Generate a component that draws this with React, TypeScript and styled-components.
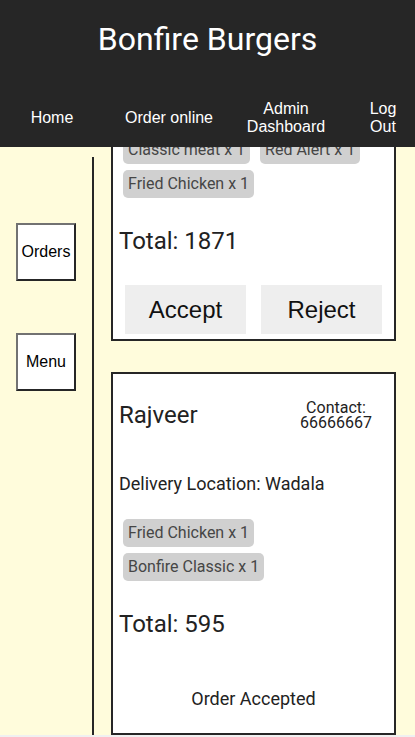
import React, { useLayoutEffect, useRef } from "react";
import styled, { createGlobalStyle } from "styled-components";

const Global = createGlobalStyle`
  html, body { margin: 0; padding: 0; background: #f0f0f0; }
  body { font-family: Roboto, "Liberation Sans", sans-serif; }
  * { box-sizing: border-box; }
`;

const Page = styled.div`
  width: 415px;
  height: 735px;
  display: flex;
  flex-direction: column;
  background: #fffcdc;
  overflow: hidden;
`;

const Header = styled.header`
  background: #262626;
  height: 147px;
  flex: none;
`;

const Title = styled.h1`
  margin: 0;
  padding: 20px 0 31px;
  font-family: Roboto, sans-serif;
  font-weight: 400;
  font-size: 32px;
  line-height: 38px;
  color: #ffffff;
  text-align: center;
`;

const Nav = styled.nav`
  display: grid;
  grid-template-columns: 104px 130px 104px 1fr;
  align-items: center;
  height: 58px;
`;

const NavItem = styled.a<{ $end?: boolean }>`
  justify-self: ${(p) => (p.$end ? "end" : "center")};
  margin-right: ${(p) => (p.$end ? "12px" : "0")};
  width: ${(p) => (p.$end ? "40px" : "auto")};
  text-align: center;
  font-family: "Liberation Sans", Arial, sans-serif;
  font-size: 16px;
  line-height: 18px;
  color: #ffffff;
`;

const Body = styled.div`
  display: flex;
  flex: 1;
  min-height: 0;
`;

const Sidebar = styled.aside`
  width: 94px;
  flex: none;
  margin-top: 10px;
  border-right: 2px solid #262626;
  padding: 66px 0 0 16px;
  display: flex;
  flex-direction: column;
  gap: 52px;
`;

const SideButton = styled.button`
  width: 60px;
  height: 58px;
  padding: 0;
  background: #ffffff;
  border: 2px solid;
  border-color: #727272 #262626 #262626 #727272;
  font-family: "Liberation Sans", Arial, sans-serif;
  font-size: 16px;
  color: #000;
`;

const Content = styled.main`
  flex: 1;
  overflow-y: auto;
  scrollbar-width: none;
  &::-webkit-scrollbar { display: none; }
`;

const Feed = styled.div`
  display: flex;
  flex-direction: column;
  gap: 31px;
  padding: 20px 19px 20px 17px;
`;

const Card = styled.section`
  width: 285px;
  background: #ffffff;
  border: 2px solid #262626;
  padding: 26px 6px 0;
  color: #222;
`;

const NameRow = styled.div`
  display: flex;
  justify-content: space-between;
  align-items: center;
  height: 30px;
`;

const Name = styled.h2`
  margin: 0;
  font-weight: 400;
  font-size: 24px;
  line-height: 28px;
`;

const Contact = styled.div`
  width: 100px;
  margin-right: 2px;
  text-align: center;
  font-size: 16px;
  line-height: 15px;
`;

const Location = styled.p`
  margin: 43px 0 0;
  font-size: 18px;
  line-height: 21px;
`;

const Tags = styled.div`
  display: flex;
  flex-wrap: wrap;
  gap: 6px 10px;
  margin: 25px 0 0 4px;
`;

const Tag = styled.span`
  height: 28px;
  padding: 0 5px;
  border-radius: 5px;
  background: #d0d0d0;
  color: #464646;
  font-size: 16px;
  line-height: 28px;
`;

const Total = styled.p`
  margin: 29px 0 0;
  font-size: 24px;
  line-height: 28px;
`;

const Actions = styled.div`
  display: flex;
  gap: 15px;
  margin: 30px 6px 5px;
`;

const ActionButton = styled.button`
  flex: 1;
  height: 49px;
  border: none;
  background: #eeeeee;
  font-family: "Liberation Sans", Arial, sans-serif;
  font-size: 24px;
  color: #111;
`;

const Status = styled.p`
  margin: 50px 0 24px;
  text-align: center;
  font-size: 18px;
  line-height: 21px;
`;

type Order = {
  name: string;
  contact: string;
  location: string;
  items: string[];
  total: number;
  accepted: boolean;
};

const orders: Order[] = [
  {
    name: "Aarav",
    contact: "98765432",
    location: "Dadar",
    items: ["Classic meat x 1", "Red Alert x 1", "Fried Chicken x 1"],
    total: 1871,
    accepted: false,
  },
  {
    name: "Rajveer",
    contact: "66666667",
    location: "Wadala",
    items: ["Fried Chicken x 1", "Bonfire Classic x 1"],
    total: 595,
    accepted: true,
  },
];

export default function App() {
  const scrollRef = useRef<HTMLElement>(null);
  useLayoutEffect(() => {
    if (scrollRef.current) scrollRef.current.scrollTop = 178;
  }, []);

  return (
    <>
      <Global />
      <Page>
        <Header>
          <Title>Bonfire Burgers</Title>
          <Nav>
            <NavItem>Home</NavItem>
            <NavItem>Order online</NavItem>
            <NavItem>Admin Dashboard</NavItem>
            <NavItem $end>Log Out</NavItem>
          </Nav>
        </Header>
        <Body>
          <Sidebar>
            <SideButton>Orders</SideButton>
            <SideButton>Menu</SideButton>
          </Sidebar>
          <Content ref={scrollRef}>
            <Feed>
              {orders.map((o) => (
                <Card key={o.name}>
                  <NameRow>
                    <Name>{o.name}</Name>
                    <Contact>
                      Contact:
                      <br />
                      {o.contact}
                    </Contact>
                  </NameRow>
                  <Location>Delivery Location: {o.location}</Location>
                  <Tags>
                    {o.items.map((it) => (
                      <Tag key={it}>{it}</Tag>
                    ))}
                  </Tags>
                  <Total>Total: {o.total}</Total>
                  {o.accepted ? (
                    <Status>Order Accepted</Status>
                  ) : (
                    <Actions>
                      <ActionButton>Accept</ActionButton>
                      <ActionButton>Reject</ActionButton>
                    </Actions>
                  )}
                </Card>
              ))}
            </Feed>
          </Content>
        </Body>
      </Page>
    </>
  );
}
